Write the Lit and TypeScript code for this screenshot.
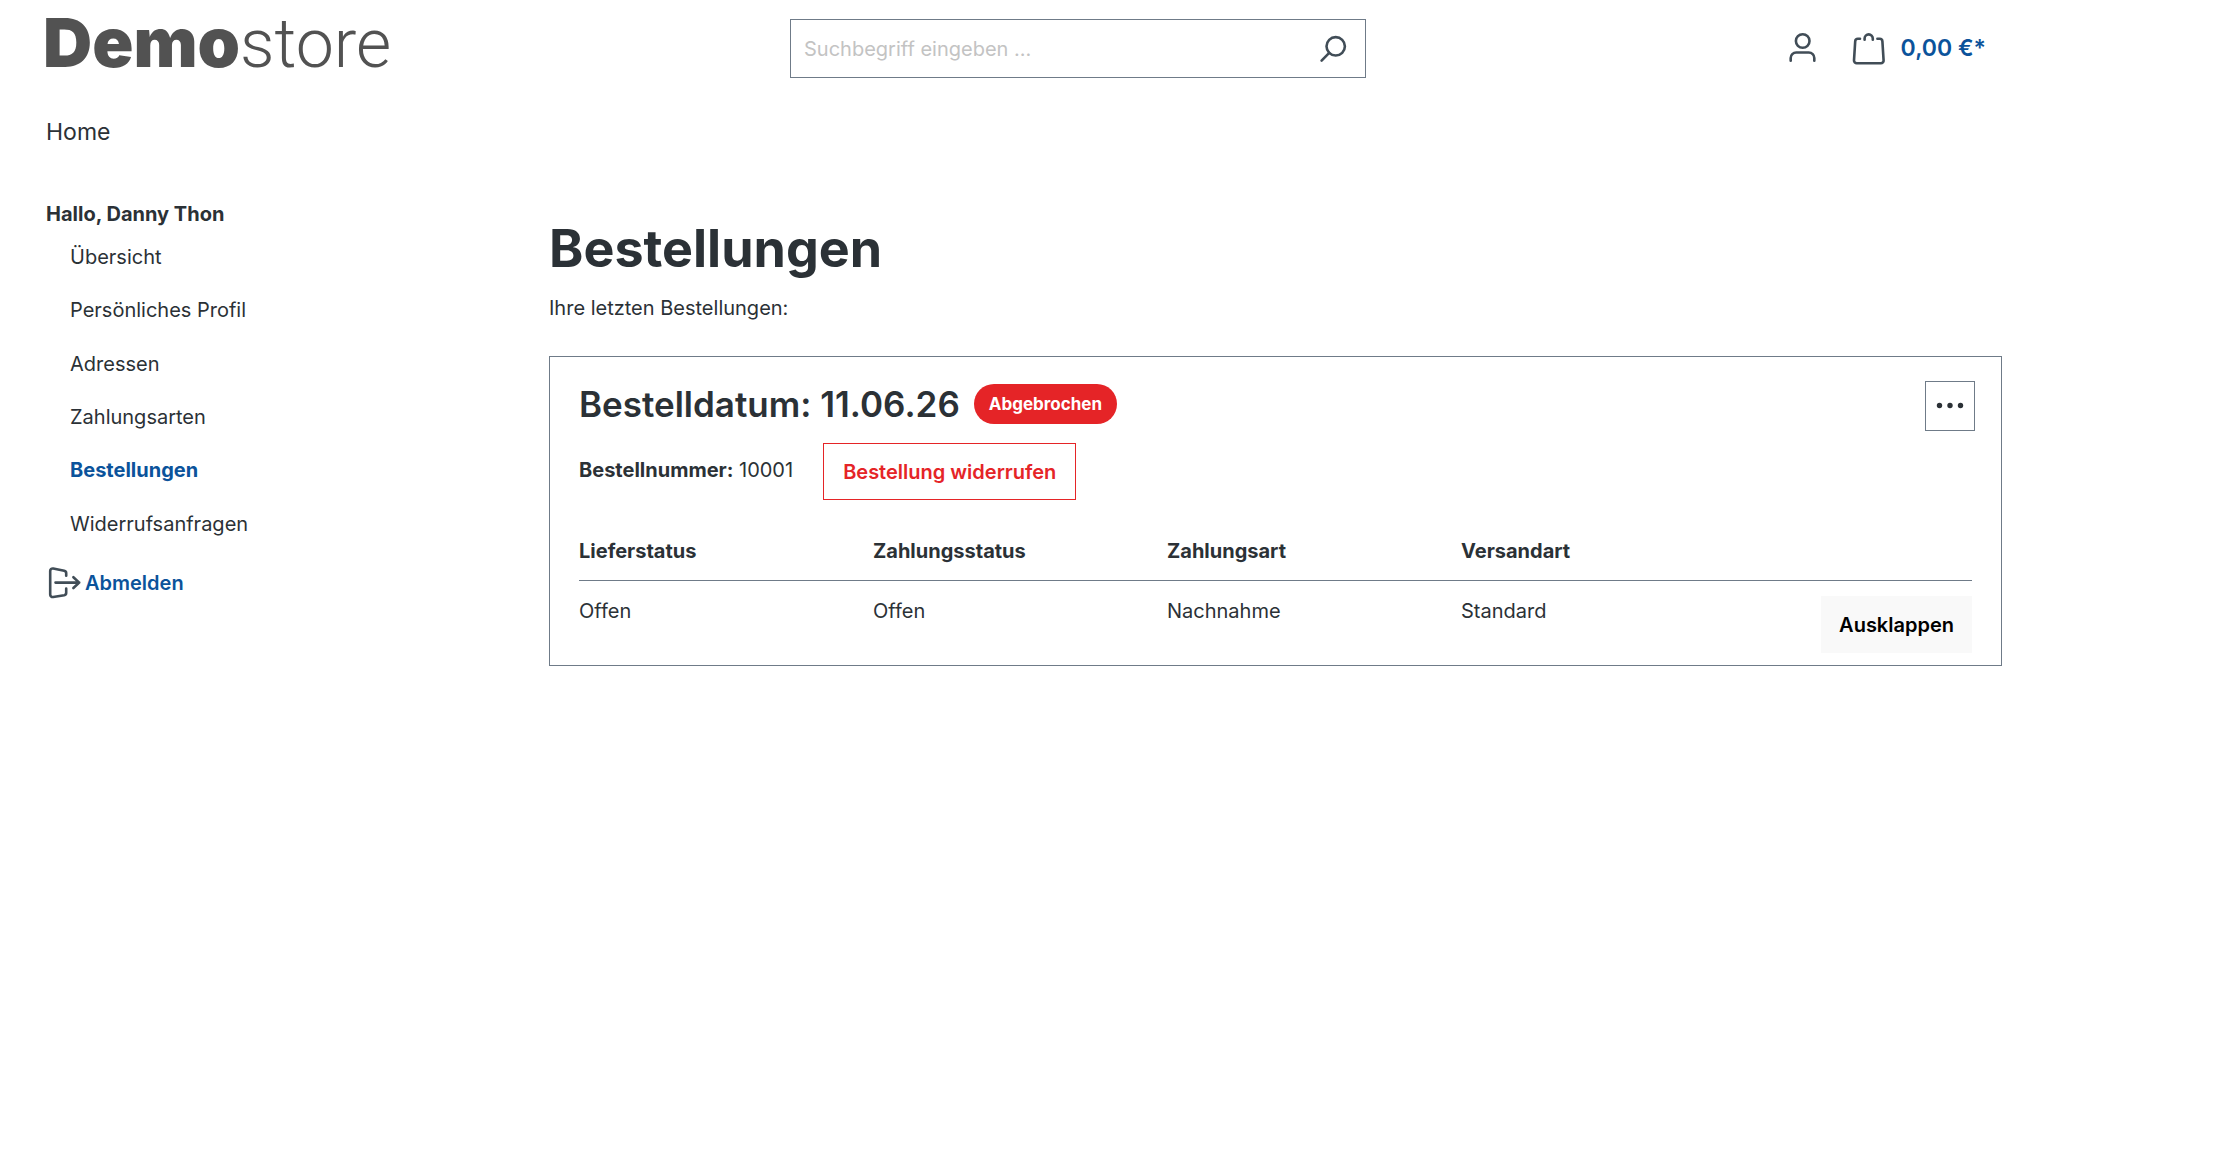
import { LitElement, html, css } from "lit";
import { customElement, state } from "lit/decorators.js";
import { classMap } from "lit/directives/class-map.js";

interface Order {
  date: string;
  number: string;
  status: string;
  delivery: string;
  payment: string;
  paymentMethod: string;
  shipping: string;
}

const accountLinks = [
  { label: "Übersicht", href: "#overview" },
  { label: "Persönliches Profil", href: "#profile" },
  { label: "Adressen", href: "#addresses" },
  { label: "Zahlungsarten", href: "#payment" },
  { label: "Bestellungen", href: "#orders", active: true },
  { label: "Widerrufsanfragen", href: "#revocations" },
];

const orders: Order[] = [
  {
    date: "11.06.26",
    number: "10001",
    status: "Abgebrochen",
    delivery: "Offen",
    payment: "Offen",
    paymentMethod: "Nachnahme",
    shipping: "Standard",
  },
];

@customElement("app-root")
export class AppRoot extends LitElement {
  @state() private query = "";

  static styles = css`
    :host {
      display: block;
      background: #fff;
      color: #2b3136;
      font: 400 20px/30px Inter, "Liberation Sans", sans-serif;
    }
    .container {
      box-sizing: border-box;
      max-width: 2048px;
      padding: 0 46px;
    }
    a {
      color: inherit;
      text-decoration: none;
    }
    button {
      font: inherit;
      color: inherit;
      cursor: pointer;
      border-radius: 0;
    }
    .icon {
      display: block;
      overflow: visible;
      width: 32px;
      height: 32px;
      fill: none;
      stroke: #414d57;
      stroke-width: 2.6;
      stroke-linecap: round;
      stroke-linejoin: round;
    }
    .header {
      display: grid;
      grid-template-columns: 503px 1fr 395px;
      align-items: center;
      min-height: 97px;
    }
    .logo {
      align-self: start;
      color: #525252;
      font-family: Roboto, Inter, sans-serif;
      font-size: 68px;
      line-height: 84px;
      font-weight: 300;
      margin-left: -3px;
      white-space: nowrap;
    }
    .logo b {
      font-family: Inter, sans-serif;
      font-weight: 900;
    }
    .search {
      display: flex;
      box-sizing: border-box;
      width: 100%;
      max-width: 576px;
      height: 59px;
      margin: 0 auto;
      border: 1px solid #6f7b88;
    }
    .search input {
      flex: 1;
      min-width: 0;
      border: 0;
      outline: 0;
      padding: 0 13px;
      background: none;
      font: inherit;
      color: inherit;
    }
    .search input::placeholder {
      color: #c3c3c3;
      opacity: 1;
    }
    .search button {
      border: 0;
      background: none;
      padding: 0 16px;
    }
    .actions {
      display: flex;
      justify-content: flex-end;
      align-items: center;
      gap: 34px;
      padding: 0 16px 2px 0;
    }
    .cart {
      display: flex;
      align-items: center;
      gap: 16px;
      color: #0b539b;
      font-size: 23px;
      font-weight: 600;
    }
    .breadcrumb {
      display: flex;
      margin-top: 18px;
      font-size: 23px;
      line-height: 34px;
    }
    .account {
      display: grid;
      grid-template-columns: 446px 1fr;
      column-gap: 57px;
      padding-top: 50px;
    }
    .greeting {
      margin: 0 0 2px;
      font-weight: 700;
    }
    .menu {
      display: grid;
      grid-auto-rows: 1fr;
      min-height: 320px;
      list-style: none;
      margin: 0;
      padding: 0 0 0 24px;
    }
    .menu a {
      display: block;
      line-height: 53px;
    }
    .menu a.active {
      color: #0b539b;
      font-weight: 700;
    }
    .logout {
      display: inline-flex;
      align-items: center;
      gap: 5px;
      margin-top: 16px;
      padding-left: 2px;
      color: #0b539b;
      font-weight: 600;
    }
    .content {
      padding-top: 19px;
    }
    h1 {
      margin: 0;
      font-size: 52px;
      line-height: 62px;
      font-weight: 700;
    }
    .intro {
      margin: 13px 0 33px;
    }
    .order {
      border: 1px solid #6f7b88;
    }
    .order-header {
      display: flex;
      justify-content: space-between;
      align-items: flex-start;
      padding: 24px 26px 0 29px;
    }
    .order-title {
      display: flex;
      align-items: center;
      gap: 14px;
      margin-bottom: 16px;
    }
    h2 {
      margin: 0;
      font-size: 35px;
      line-height: 46px;
      font-weight: 600;
    }
    .badge {
      background: #e52427;
      color: #fff;
      border-radius: 20px;
      padding: 0 15px;
      font-size: 17px;
      line-height: 40px;
      font-weight: 700;
    }
    .order-number {
      display: flex;
      gap: 30px;
      line-height: 54px;
    }
    .order-number b,
    th {
      font-weight: 700;
    }
    .revoke {
      box-sizing: border-box;
      height: 57px;
      padding: 0 19px;
      border: 1px solid #e52427;
      background: #fff;
      color: #e52427;
      font-weight: 600;
    }
    .more {
      display: grid;
      place-items: center;
      width: 50px;
      height: 50px;
      padding: 0;
      border: 1px solid #6f7b88;
      background: #fff;
    }
    .dots {
      fill: #2b3136;
      stroke: none;
    }
    .order-body {
      padding: 36px 29px 12px;
    }
    table {
      width: 100%;
      table-layout: fixed;
      border-collapse: collapse;
      text-align: left;
    }
    th {
      padding: 0 0 14px;
      border-bottom: 1px solid #6f7b88;
    }
    td {
      padding: 15px 0 0;
      vertical-align: top;
      line-height: 30px;
    }
    .action-col {
      width: 217px;
      text-align: right;
    }
    .expand {
      box-sizing: border-box;
      height: 57px;
      padding: 0 18px;
      border: 0;
      background: #f9f9f9;
      color: #000;
      font-weight: 600;
      vertical-align: top;
    }
  `;

  private renderOrder(order: Order) {
    return html`
      <article class="order">
        <div class="order-header">
          <div>
            <div class="order-title">
              <h2>Bestelldatum: ${order.date}</h2>
              <span class="badge">${order.status}</span>
            </div>
            <div class="order-number">
              <span><b>Bestellnummer:</b> ${order.number}</span>
              <button class="revoke" type="button">Bestellung widerrufen</button>
            </div>
          </div>
          <button class="more" type="button" aria-label="Aktionen">
            <svg class="icon dots" viewBox="0 0 32 32">
              <circle cx="5.5" cy="15.500" r="2.700" />
              <circle cx="16" cy="15.500" r="2.700" />
              <circle cx="26.500" cy="15.500" r="2.700" />
            </svg>
          </button>
        </div>
        <div class="order-body">
          <table>
            <thead>
              <tr>
                <th scope="col">Lieferstatus</th>
                <th scope="col">Zahlungsstatus</th>
                <th scope="col">Zahlungsart</th>
                <th scope="col">Versandart</th>
                <th class="action-col"></th>
              </tr>
            </thead>
            <tbody>
              <tr>
                <td>${order.delivery}</td>
                <td>${order.payment}</td>
                <td>${order.paymentMethod}</td>
                <td>${order.shipping}</td>
                <td class="action-col">
                  <button class="expand" type="button">Ausklappen</button>
                </td>
              </tr>
            </tbody>
          </table>
        </div>
      </article>
    `;
  }

  render() {
    return html`
      <div class="container">
        <header class="header">
          <a class="logo" href="#home"><b>Demo</b>store</a>
          <form class="search" role="search" @submit=${(e: Event) => e.preventDefault()}>
            <input
              type="text"
              aria-label="Suchbegriff"
              placeholder="Suchbegriff eingeben ..."
              .value=${this.query}
              @input=${(e: Event) => (this.query = (e.target as HTMLInputElement).value)}
            />
            <button type="submit" aria-label="Suchen">
              <svg class="icon" viewBox="0 0 32 32">
                <circle cx="18.700" cy="13.300" r="9.200" />
                <path d="M12.200 19.800 4.600 27.600" />
              </svg>
            </button>
          </form>
          <div class="actions">
            <a href="#account" aria-label="Mein Konto">
              <svg class="icon" viewBox="0 0 32 32">
                <circle cx="15.700" cy="9" r="6.800" />
                <path d="M3.700 28.700V26a5.500 5.500 0 0 1 5.500-5.500h12.600a5.500 5.500 0 0 1 5.500 5.500v2.700" />
              </svg>
            </a>
            <a class="cart" href="#cart">
              <svg class="icon" viewBox="0 0 32 32">
                <path d="M7 6.800H4.900a2.700 2.700 0 0 0-2.700 2.500L1 28.300a2.700 2.700 0 0 0 2.700 2.900h24.200a2.700 2.700 0 0 0 2.700-2.900L29.400 9.300a2.700 2.700 0 0 0-2.700-2.500H24.400" />
                <path d="M11.600 7.800V6.500a4.100 4.100 0 0 1 8.200 0v1.300" />
              </svg>
              <span>0,00 €*</span>
            </a>
          </div>
        </header>
        <nav class="breadcrumb"><a href="#home">Home</a></nav>
        <div class="account">
          <aside>
            <p class="greeting">Hallo, Danny Thon</p>
            <ul class="menu">
              ${accountLinks.map(
                (l) => html`<li>
                  <a class=${classMap({ active: !!l.active })} href=${l.href}>${l.label}</a>
                </li>`
              )}
            </ul>
            <a class="logout" href="#logout">
              <svg class="icon" viewBox="0 0 32 32">
                <path d="M18.200 8.800V6.200a2.500 2.500 0 0 0-2-2.500L5.200 1.500A2.500 2.500 0 0 0 2.200 4v23.500A2.500 2.500 0 0 0 5.200 30l11-1.800a2.500 2.500 0 0 0 2-2.500v-4.200" />
                <path d="M7.500 15.600H31.200M25.400 10.200 31.200 15.600l-5.800 5.400" />
              </svg>
              <span>Abmelden</span>
            </a>
          </aside>
          <main class="content">
            <h1>Bestellungen</h1>
            <p class="intro">Ihre letzten Bestellungen:</p>
            ${orders.map((o) => this.renderOrder(o))}
          </main>
        </div>
      </div>
    `;
  }
}
